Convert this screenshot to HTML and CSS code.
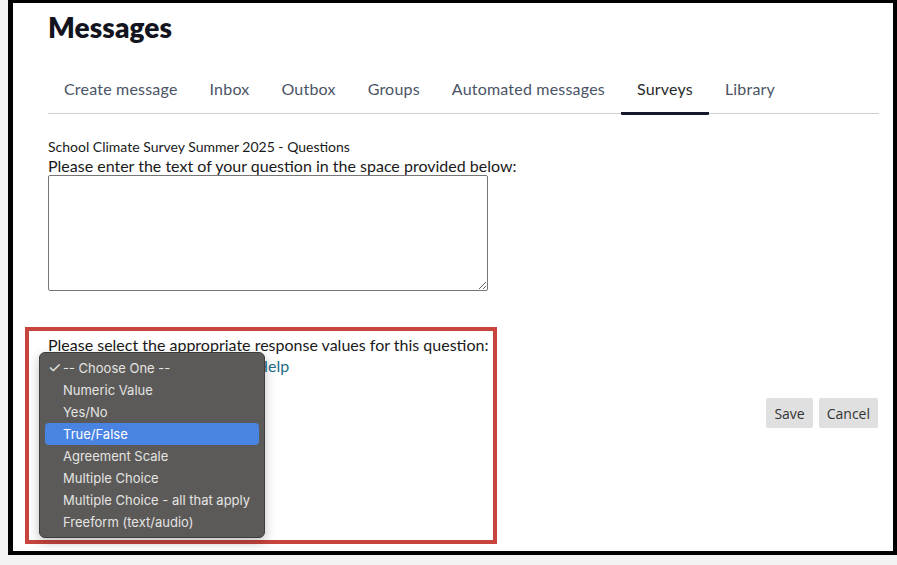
FILE: index.html
```html
<!DOCTYPE html>
<html lang="en">
<head>
<meta charset="utf-8">
<title>Messages - Surveys</title>
<link rel="stylesheet" href="styles.css">
</head>
<body>
<div class="frame">
  <h1 class="title">Messages</h1>
  <nav class="tabs">
    <a class="tab">Create message</a>
    <a class="tab">Inbox</a>
    <a class="tab">Outbox</a>
    <a class="tab">Groups</a>
    <a class="tab">Automated messages</a>
    <a class="tab active">Surveys</a>
    <a class="tab">Library</a>
  </nav>
  <div class="survey-name">School Climate Survey Summer 2025 - Questions</div>
  <label class="prompt" for="q">Please enter the text of your question in the space provided below:</label>
  <textarea id="q" class="question"></textarea>

  <div class="prompt response">Please select the appropriate response values for this question:</div>
  <div class="select-row">
    <select class="response-select"><option>-- Choose One --</option></select>
    <a class="help">Help</a>
  </div>
  <div class="actions">
    <button class="btn">Save</button>
    <button class="btn">Cancel</button>
  </div>

  <div class="highlight"></div>
  <ul class="menu">
    <li class="item checked"><span class="check">✓</span>-- Choose One --</li>
    <li class="item">Numeric Value</li>
    <li class="item">Yes/No</li>
    <li class="item selected">True/False</li>
    <li class="item">Agreement Scale</li>
    <li class="item">Multiple Choice</li>
    <li class="item">Multiple Choice - all that apply</li>
    <li class="item">Freeform (text/audio)</li>
  </ul>
</div>
</body>
</html>
```
FILE: styles.css
```css
html, body {
  margin: 0;
  padding: 0;
  background: #f3f3f3;
}
body {
  font-family: "Lato", "Open Sans", sans-serif;
  color: #1b1b1b;
}
.frame {
  position: relative;
  box-sizing: border-box;
  margin-left: 8px;
  width: 889px;
  height: 555px;
  background: #ffffff;
  border-style: solid;
  border-color: #000;
  border-width: 3px 4px 4px 5px;
  padding: 7px 14px 0 35px;
}
.title {
  margin: 0;
  font-size: 28px;
  line-height: 34px;
  font-weight: 800;
  color: #121420;
  letter-spacing: 0.1px;
}
.tabs {
  display: flex;
  border-bottom: 1px solid #cfcfcf;
}
.tab {
  padding: 33px 16px 11px;
  font-size: 16px;
  line-height: 24px;
  font-weight: 400;
  letter-spacing: 0.2px;
  color: #4a5466;
  border-bottom: 3px solid transparent;
  margin-bottom: -2px;
}
.tab.active {
  color: #2a2a2a;
  border-bottom-color: #141a2b;
  border-radius: 0 0 1px 1px;
}
.survey-name {
  margin-top: 24px;
  font-size: 14px;
  line-height: 18px;
  color: #1a1a1a;
}
.prompt {
  display: block;
  font-size: 16px;
  line-height: 19px;
  color: #1a1a1a;
}
.question {
  display: block;
  box-sizing: border-box;
  width: 440px;
  height: 116px;
  margin: 0;
  border: 1px solid #767676;
  border-radius: 2px;
  resize: vertical;
}
.response {
  margin-top: 44px;
}
.select-row {
  display: flex;
  align-items: center;
  gap: 8px;
  height: 22px;
}
.response-select {
  width: 200px;
  height: 20px;
}
.help {
  font-size: 16px;
  color: #1f6d88;
}
.actions {
  display: flex;
  justify-content: flex-end;
  gap: 6px;
  margin-top: 22px;
  margin-right: 1px;
}
.btn {
  height: 30px;
  padding: 0 8px;
  border: none;
  border-radius: 2px;
  background: #e0e0e0;
  font-family: "Open Sans", sans-serif;
  font-size: 14px;
  color: #333;
}
.highlight {
  position: absolute;
  left: 12px;
  top: 324px;
  width: 472px;
  height: 217px;
  box-sizing: border-box;
  border: 4px solid #c8453d;
  pointer-events: none;
}
.menu {
  position: absolute;
  left: 26px;
  top: 349px;
  width: 226px;
  height: 186px;
  box-sizing: border-box;
  margin: 0;
  padding: 4px 5px;
  list-style: none;
  background: #5b5a58;
  border: 1px solid #3e3d3b;
  border-radius: 6px;
  box-shadow: 0 4px 12px rgba(0, 0, 0, 0.25);
  font-family: "Inter", "Roboto", sans-serif;
  font-size: 13px;
}
.item {
  position: relative;
  height: 22px;
  line-height: 22px;
  padding-left: 18px;
  border-radius: 4px;
  color: #e4e4e2;
}
.item.selected {
  background: #4a84e3;
  color: #ffffff;
}
.check {
  position: absolute;
  left: 3px;
  top: 0;
  font-size: 15px;
}
```
